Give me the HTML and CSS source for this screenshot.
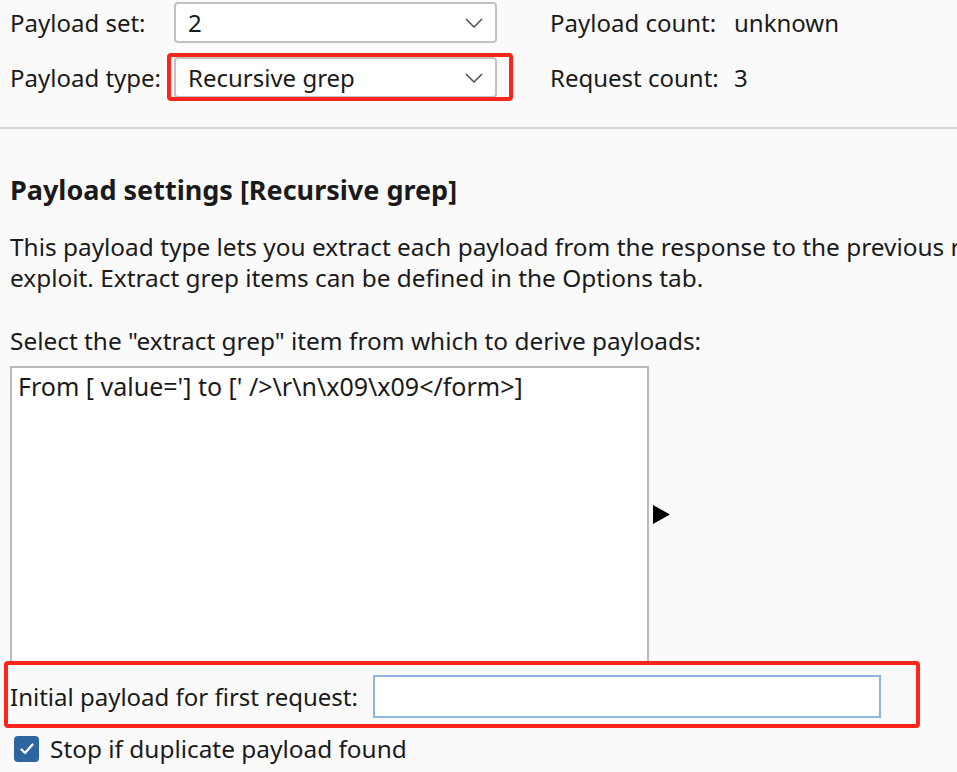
FILE: index.html
```html
<!DOCTYPE html>
<html>
<head>
<meta charset="utf-8">
<link rel="stylesheet" href="styles.css">
</head>
<body>
<div class="page">
  <section class="top">
    <div class="field-grid">
      <span class="lbl">Payload set:</span>
      <div class="select"><span>2</span><svg class="chev" width="18" height="10" viewBox="0 0 18 10"><path d="M1 1 L9 9 L17 1" fill="none" stroke="#555" stroke-width="1.6"/></svg></div>
      <div class="count"><span class="count-lbl">Payload count:</span><span>unknown</span></div>

      <span class="lbl">Payload type:</span>
      <div class="select hl-a"><span>Recursive grep</span><svg class="chev" width="18" height="10" viewBox="0 0 18 10"><path d="M1 1 L9 9 L17 1" fill="none" stroke="#555" stroke-width="1.6"/></svg></div>
      <div class="count"><span class="count-lbl">Request count:</span><span>3</span></div>
    </div>
  </section>
  <hr class="divider">
  <section class="settings">
    <h2 class="heading">Payload settings [Recursive grep]</h2>
    <p class="desc">This payload type lets you extract each payload from the response to the previous request in the attack, for example to build a data mining<br>exploit. Extract grep items can be defined in the Options tab.</p>
    <p class="select-lbl">Select the "extract grep" item from which to derive payloads:</p>
    <div class="list-row">
      <div class="listbox"><div class="list-item">From [ value='] to [' /&gt;\r\n\x09\x09&lt;/form&gt;]</div></div>
      <svg class="arrow" width="17" height="19" viewBox="0 0 17 19"><polygon points="0,0 17,9.5 0,19" fill="#000"/></svg>
    </div>
    <div class="initial hl-b">
      <span class="lbl">Initial payload for first request:</span>
      <div class="textinput"></div>
    </div>
    <label class="check-row"><span class="checkbox"><svg width="14" height="12" viewBox="0 0 14 12"><path d="M1.5 6.5 L5 10 L12.5 1.5" fill="none" stroke="#fff" stroke-width="2.2" stroke-linecap="round" stroke-linejoin="round"/></svg></span><span>Stop if duplicate payload found</span></label>
  </section>
</div>
</body>
</html>
```

FILE: styles.css
```css
html, body {
  margin: 0;
  padding: 0;
  background: #fafafa;
  overflow: hidden;
}
body {
  font-family: "Noto Sans", "Open Sans", sans-serif;
  font-size: 24px;
  color: #1a1a1a;
  width: 957px;
  height: 772px;
}
.page {
  width: 957px;
}
.top {
  padding: 2px 0 0 10px;
}
.field-grid {
  display: grid;
  grid-template-columns: 164px 323px auto;
  grid-template-rows: 41px 41px;
  row-gap: 14px;
  column-gap: 0;
  align-items: center;
}
.lbl {
  line-height: 33px;
  white-space: nowrap;
}
.select {
  position: relative;
  box-sizing: border-box;
  height: 41px;
  border: 2px solid #c2c0c0;
  border-radius: 4px;
  background: #fff;
  display: flex;
  align-items: center;
  justify-content: space-between;
  padding: 0 12px 0 12px;
  line-height: 33px;
}
.chev {
  margin-top: 1px;
}
.count {
  display: flex;
  padding-left: 53px;
  line-height: 33px;
  white-space: nowrap;
}
.count-lbl {
  width: 184px;
}
.hl-a::after {
  content: "";
  position: absolute;
  left: -9px;
  right: -18px;
  top: -6px;
  bottom: -5px;
  border: 4px solid #ff2519;
  border-radius: 4px;
  pointer-events: none;
}
.divider {
  margin: 29px 0 0 0;
  border: 0;
  height: 2px;
  background: #d5d5d5;
}
.settings {
  padding: 0 0 0 10px;
  font-size: 24.4px;
}
.heading {
  margin: 43px 0 0 0;
  font-size: 27px;
  font-weight: 700;
  line-height: 36px;
  white-space: nowrap;
}
.desc {
  margin: 23px 0 0 0;
  line-height: 31px;
  white-space: nowrap;
}
.select-lbl {
  margin: 31px 0 0 0;
  line-height: 33px;
  white-space: nowrap;
}
.list-row {
  display: flex;
  align-items: center;
  margin-top: 9px;
}
.listbox {
  box-sizing: border-box;
  width: 639px;
  height: 297px;
  border: 2px solid #bdb9b9;
  border-bottom: none;
  background: #fff;
  padding: 3px 6px;
}
.list-item {
  font-size: 25px;
  line-height: 30px;
  white-space: nowrap;
}
.arrow {
  margin-left: 4px;
  display: block;
}
.initial {
  position: relative;
  display: flex;
  align-items: center;
  height: 43px;
  margin-top: 12px;
  width: 871px;
}
.initial .lbl {
  width: 363px;
  font-size: 24px;
}
.textinput {
  box-sizing: border-box;
  width: 508px;
  height: 43px;
  border: 2px solid #8fb4e0;
  background: #fff;
}
.hl-b::after {
  content: "";
  position: absolute;
  left: -6px;
  right: -39px;
  top: -14px;
  bottom: -10px;
  border: 4px solid #ff2519;
  border-radius: 4px;
  pointer-events: none;
}
.check-row {
  display: flex;
  align-items: center;
  margin-top: 14px;
  margin-left: 4px;
  line-height: 33px;
}
.checkbox {
  box-sizing: border-box;
  width: 25px;
  height: 26px;
  border-radius: 4px;
  background: #2c65a0;
  display: flex;
  align-items: center;
  justify-content: center;
  margin-right: 11px;
}
```
